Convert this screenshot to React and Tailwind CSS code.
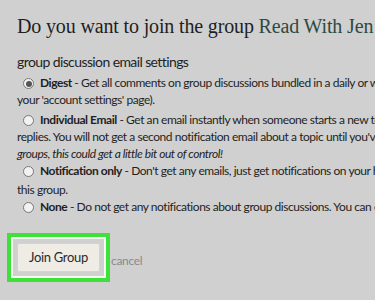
import React from 'react';

function Radio({ checked }) {
  return (
    <span className="relative top-[1px] mr-[6px] inline-block h-[11px] w-[11px] rounded-full border border-[#777] bg-[#f2f2f2] align-[-1px]">
      {checked && <span className="absolute left-[1.5px] top-[1.5px] h-[6px] w-[6px] rounded-full bg-[#555]" />}
    </span>
  );
}

export default function App() {
  return (
    <div className="h-[300px] w-[375px] overflow-hidden bg-[#d0d0d0] text-[#1f1f1f]">
      <h1 className="whitespace-nowrap pl-[17px] pt-[14px] font-['Liberation_Serif',serif] text-[20px] leading-[24px] tracking-[-0.15px]">
        Do you want to join the group <span className="text-[#2e4a42]">Read With Jen</span>
      </h1>

      <div className="mt-[14px] whitespace-nowrap pl-[17px] font-['Lato',sans-serif] text-[12px] leading-[17px] tracking-[-0.45px]">
        <div className="mb-[2px] text-[14px] leading-[20px] tracking-[-0.6px]">group discussion email settings</div>

        <div className="pl-[6px]">
          <Radio checked />
          <b>Digest</b> - Get all comments on group discussions bundled in a daily or weekly email (you can change this on
        </div>
        <div>your 'account settings' page).</div>

        <div className="pl-[6px] pt-[3px]">
          <Radio />
          <b>Individual Email</b> - Get an email instantly when someone starts a new topic, and again each time someone
        </div>
        <div>replies. You will not get a second notification email about a topic until you've visited it. <i>For busy</i></div>
        <div className="italic">groups, this could get a little bit out of control!</div>

        <div className="pl-[6px]">
          <Radio />
          <b>Notification only</b> - Don't get any emails, just get notifications on your home page when there is activity in
        </div>
        <div className="pt-[2px]">this group.</div>

        <div className="pl-[6px]">
          <Radio />
          <b>None</b> - Do not get any notifications about group discussions. You can change this setting at any time.
        </div>
      </div>

      <div className="mt-[18px] flex items-center pl-[7px] font-['Lato',sans-serif]">
        <div className="border-[4px] border-[#3ee03a] p-[2px] shadow-[inset_0_0_0_2px_#f4fff2]">
          <div className="p-[4px]">
            <button className="h-[29px] w-[83px] rounded-[2px] border border-[#d8d4cc] bg-[#efece6] text-[13px] tracking-[-0.3px] text-[#2a2a2a]">
              Join Group
            </button>
          </div>
        </div>
        <span className="ml-[1px] mt-[6px] text-[12px] tracking-[-0.3px] text-[#8a8a8a]">cancel</span>
      </div>
    </div>
  );
}
